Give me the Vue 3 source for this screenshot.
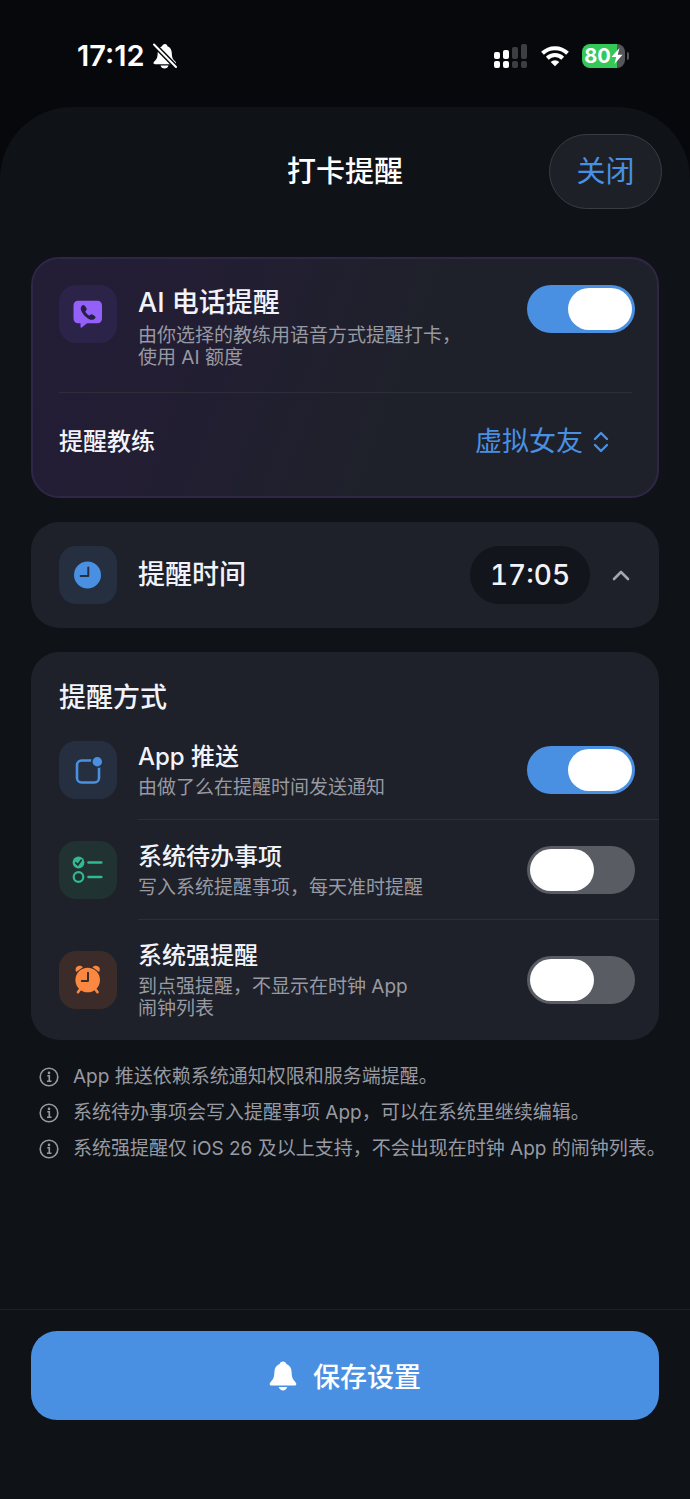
<template>
  <div class="page">
    <div class="status-bar">
      <div class="status-left">
        <span class="status-time">17:12</span>
        <svg class="icon-mute" viewBox="0 0 24 26" aria-hidden="true">
          <path
            d="M12 1c-1.600 0-2.700 1-3 2.300C6.300 4.500 4.800 6.800 4.700 10c-.100 4.500-.900 6-2.900 8-.9.900-1.300 1.400-1.300 2 0 .8.600 1.200 1.500 1.200h19.500c.9 0 1.500-.4 1.500-1.200 0-.6-.4-1.100-1.300-2-2-2-2.800-3.500-2.900-8-.100-3.200-1.600-5.500-4.300-6.700C14.200 2 13.600 1 12 1z"
            fill="#fff"
          />
          <path d="M7.500 22.600h8c-.5 1.800-2 2.900-4 2.900s-3.500-1.100-4-2.900z" fill="#fff" />
          <path d="M0 0.500L24 25" stroke="#07080c" stroke-width="5" />
          <path d="M1 1.500L23 24" stroke="#fff" stroke-width="2" stroke-linecap="round" />
        </svg>
      </div>
      <div class="status-right">
        <svg class="icon-signal" viewBox="0 0 34 24" aria-hidden="true">
          <g fill="#fff">
            <rect x="0" y="8" width="6" height="7" rx="2" />
            <rect x="9" y="6" width="6" height="9" rx="2" />
            <rect x="0" y="17" width="6" height="7" rx="2" />
            <rect x="9" y="17" width="6" height="7" rx="2" />
          </g>
          <g fill="#3d3e41">
            <rect x="18" y="3" width="6" height="12" rx="2" />
            <rect x="27" y="0" width="6" height="15" rx="2" />
            <rect x="18" y="17" width="6" height="7" rx="2" />
            <rect x="27" y="17" width="6" height="7" rx="2" />
          </g>
        </svg>
        <svg class="icon-wifi" viewBox="0 0 28 22" aria-hidden="true">
          <g fill="none" stroke="#fff" stroke-width="4">
            <path d="M1.500 8.200a18 18 0 0 1 25 0" />
            <path d="M6.300 13.200a11 11 0 0 1 15.400 0" />
          </g>
          <path d="M9.700 16.900a6.200 6.200 0 0 1 8.600 0L14 21.300z" fill="#fff" />
        </svg>
        <div class="battery">
          <span class="battery-level">80</span>
          <svg class="icon-bolt" viewBox="0 0 12 16" aria-hidden="true">
            <path d="M8.500 0L0.500 9h4.700L3.500 16l8-9.300H6.800z" fill="#fff" />
          </svg>
        </div>
        <span class="battery-nub"></span>
      </div>
    </div>

    <main class="sheet">
      <header class="sheet-header">
        <h1>打卡提醒</h1>
        <button type="button" class="btn-close">关闭</button>
      </header>

      <div class="content">
        <section class="card card-ai">
          <div class="ai-row">
            <span class="icon-box purple">
              <svg viewBox="0 0 58 58" aria-hidden="true">
                <path
                  d="M19 15.700h19.500a4.500 4.500 0 0 1 4.500 4.500v13.600a4.500 4.500 0 0 1-4.500 4.500H28l-5.200 4.200c-.7.500-1.300.2-1.300-.6v-3.600H19a4.500 4.500 0 0 1-4.500-4.500V20.200a4.500 4.500 0 0 1 4.500-4.500z"
                  fill="#9360fa"
                />
                <path
                  d="M22.300 21.600c.9-1.300 2.200-2.200 3.300-1 .8 1 1.500 2 2 3 .4 1-.1 1.600-.8 2.200-.5.500-.5.900-.2 1.400.8 1.400 1.900 2.500 3.300 3.200.5.300.9.200 1.300-.3.600-.8 1.300-1.200 2.200-.7l2.600 1.800c1.200.9.300 2.300-1 3.100-1.500.9-3.300.7-5.300-.4-3.300-1.800-5.900-4.500-7.300-7.800-.8-1.800-.9-3.300-.1-4.500z"
                  fill="#281f45"
                />
              </svg>
            </span>
            <div class="text">
              <label class="title large" for="ai-call">AI 电话提醒</label>
              <p class="desc">{{ aiDesc }}</p>
            </div>
            <input id="ai-call" v-model="aiCall" class="switch" type="checkbox" role="switch" />
          </div>
          <div class="coach-row">
            <label class="title" for="coach">提醒教练</label>
            <div class="coach-picker">
              <select id="coach" v-model="coach">
                <option v-for="c in coaches" :key="c">{{ c }}</option>
              </select>
              <svg class="icon-updown" viewBox="0 0 16 22" aria-hidden="true">
                <path d="M2 8l6-6 6 6M2 14l6 6 6-6" />
              </svg>
            </div>
          </div>
        </section>

        <section class="card card-time">
          <span class="icon-box blue">
            <svg viewBox="0 0 58 58" aria-hidden="true">
              <circle cx="28.500" cy="29" r="13.500" fill="#4a90e2" />
              <path d="M29.300 21.500V30h-7.600" fill="none" stroke="#252f40" stroke-width="2" stroke-linecap="round" stroke-linejoin="round" />
            </svg>
          </span>
          <h2 class="title large">提醒时间</h2>
          <button type="button" class="btn-time">{{ time }}</button>
          <button type="button" class="btn-expand" aria-label="展开" @click="expanded = !expanded">
            <svg viewBox="0 0 18 12" aria-hidden="true">
              <path d="M2 10l7-7 7 7" />
            </svg>
          </button>
        </section>

        <section class="card card-methods">
          <h2 class="title large">提醒方式</h2>
          <div v-for="m in methods" :key="m.id" class="method">
            <span class="icon-box" :class="m.color">
              <svg v-if="m.id === 'push'" viewBox="0 0 58 58" aria-hidden="true">
                <rect x="18" y="19.500" width="22" height="22" rx="4.500" fill="none" stroke="#4a90e2" stroke-width="2.600" />
                <circle cx="38.300" cy="20.700" r="6.400" fill="#252f40" />
                <circle cx="38.300" cy="20.700" r="4.700" fill="#4a90e2" />
              </svg>
              <svg v-else-if="m.id === 'todo'" viewBox="0 0 58 58" aria-hidden="true">
                <circle cx="19.500" cy="21.500" r="5.900" fill="#32b892" />
                <path d="M16.800 21.800l2 2.200 3.400-4.800" fill="none" stroke="#203232" stroke-width="1.800" stroke-linecap="round" stroke-linejoin="round" />
                <circle cx="19.500" cy="36" r="4.800" fill="none" stroke="#32b892" stroke-width="2.200" />
                <path d="M29.500 21.500h12.800M29.500 36h12.800" stroke="#32b892" stroke-width="2.600" stroke-linecap="round" />
              </svg>
              <svg v-else viewBox="0 0 58 58" aria-hidden="true">
                <g fill="none" stroke="#fb8841" stroke-width="2.600" stroke-linecap="round">
                  <path d="M21 38.500l-2 2.600M36.500 38.500l2 2.600" />
                </g>
                <path d="M17.200 20.900c-1.100-2 -.7-4.300.9-5.400 2-1.200 4.600-.7 5.800.8zM40.200 20.900c1.100-2 .7-4.300-.9-5.400-2-1.200-4.600-.7-5.800.8z" fill="#fb8841" />
                <circle cx="28.700" cy="29" r="12.300" fill="#fb8841" />
                <path d="M29 21.800V30h-6.200" fill="none" stroke="#3b2c2a" stroke-width="2" stroke-linecap="round" stroke-linejoin="round" />
              </svg>
            </span>
            <div class="method-body">
              <div class="text">
                <label class="title" :for="m.id">{{ m.title }}</label>
                <p class="desc">{{ m.desc }}</p>
              </div>
              <input :id="m.id" v-model="m.on" class="switch" type="checkbox" role="switch" />
            </div>
          </div>
        </section>

        <ul class="notes">
          <li v-for="note in notes" :key="note">
            <svg viewBox="0 0 20 20" aria-hidden="true">
              <circle cx="10" cy="10" r="8.800" />
              <path d="M8.300 8.800h2v5.200M8 14.200h4.500" />
              <circle class="dot" cx="10" cy="5.900" r="1.300" />
            </svg>
            <span>{{ note }}</span>
          </li>
        </ul>
      </div>

      <footer class="footer">
        <button type="button" class="btn-save">
          <svg viewBox="0 0 28 30" aria-hidden="true">
            <path
              d="M14 .5c-1.800 0-3 1-3.400 2.500C7.300 4.200 5.500 7 5.400 11c-.1 5-1.200 7.300-3.500 9.700C1 21.600.700 22.300.700 23c0 1 .8 1.600 1.900 1.600h22.800c1.100 0 1.900-.6 1.900-1.600 0-.7-.3-1.400-1.200-2.300-2.300-2.400-3.400-4.700-3.500-9.700-.1-4-1.900-6.800-5.200-8C17 1.500 15.800.5 14 .5z"
              fill="#fff"
            />
            <path d="M9.800 26h8.400c-.6 2.100-2.200 3.500-4.200 3.500S10.400 28.100 9.800 26z" fill="#fff" />
          </svg>
          <span>保存设置</span>
        </button>
      </footer>
    </main>
  </div>
</template>

<script setup>
import { ref } from 'vue'

const aiCall = ref(true)
const aiDesc = '由你选择的教练用语音方式提醒打卡，\n使用 AI 额度'

const coaches = ['虚拟女友']
const coach = ref('虚拟女友')

const time = ref('17:05')
const expanded = ref(false)

const methods = ref([
  { id: 'push', color: 'blue', title: 'App 推送', desc: '由做了么在提醒时间发送通知', on: true },
  { id: 'todo', color: 'green', title: '系统待办事项', desc: '写入系统提醒事项，每天准时提醒', on: false },
  { id: 'alarm', color: 'orange', title: '系统强提醒', desc: '到点强提醒，不显示在时钟 App\n闹钟列表', on: false }
])

const notes = [
  'App 推送依赖系统通知权限和服务端提醒。',
  '系统待办事项会写入提醒事项 App，可以在系统里继续编辑。',
  '系统强提醒仅 iOS 26 及以上支持，不会出现在时钟 App 的闹钟列表。'
]
</script>

<style>
body {
  background: #07080c;
}
</style>

<style scoped>
.page {
  min-height: 100vh;
  display: flex;
  flex-direction: column;
  background: #07080c;
  color: #f2f3fa;
  font-family: Inter, "Noto Sans CJK SC", sans-serif;
}

.page * {
  box-sizing: border-box;
}

button,
select {
  font-family: inherit;
  border: none;
  cursor: pointer;
}

svg {
  display: block;
  flex: none;
}

h1,
h2,
p,
ul {
  margin: 0;
  padding: 0;
}

/* Status bar */
.status-bar {
  height: 107px;
  padding: 5px 61px 0 77px;
  display: flex;
  justify-content: space-between;
  align-items: center;
}

.status-left,
.status-right {
  display: flex;
  align-items: center;
}

.status-left {
  gap: 8px;
}

.status-time {
  font-size: 29px;
  font-weight: 600;
  line-height: 32px;
  color: #fff;
}

.icon-mute {
  width: 24px;
  height: 26px;
}

.icon-signal {
  width: 34px;
  height: 24px;
  margin-right: 13px;
}

.icon-wifi {
  width: 28px;
  height: 22px;
  margin-right: 13px;
}

.battery {
  width: 43px;
  height: 24px;
  border-radius: 8px;
  display: flex;
  align-items: center;
  justify-content: center;
  background: linear-gradient(90deg, #34c759 82%, #55565a 82%);
}

.battery-level {
  font-size: 20px;
  font-weight: 700;
  line-height: 24px;
  color: #fff;
}

.icon-bolt {
  width: 12px;
  height: 16px;
}

.battery-nub {
  width: 2px;
  height: 8px;
  margin-left: 2px;
  border-radius: 0 2px 2px 0;
  background: #55565a;
}

/* Sheet */
.sheet {
  flex: 1;
  display: flex;
  flex-direction: column;
  background: #0f1216;
  border-radius: 72px 72px 0 0;
}

.sheet-header {
  display: grid;
  grid-template-columns: 1fr auto 1fr;
  align-items: center;
  padding: 27px 28px 48px;
}

.sheet-header h1 {
  grid-column: 2;
  font-size: 29px;
  font-weight: 500;
  line-height: 40px;
  color: #fff;
}

.btn-close {
  justify-self: end;
  width: 113px;
  height: 75px;
  padding: 0;
  border: 1px solid #3a3c44;
  border-radius: 38px;
  background: #1d2027;
  color: #4a90e2;
  font-size: 29px;
  line-height: 40px;
}

.content {
  display: flex;
  flex-direction: column;
  gap: 24px;
  padding: 0 31px;
}

.card {
  background: #1e2129;
  border-radius: 28px;
}

.icon-box {
  flex: none;
  width: 58px;
  height: 58px;
  border-radius: 17px;
}

.icon-box.purple {
  background: #2c2348;
}

.icon-box.blue {
  background: #252f40;
}

.icon-box.green {
  background: #203232;
}

.icon-box.orange {
  background: #3b2c2a;
}

.text {
  flex: 1;
  display: flex;
  flex-direction: column;
  gap: 4px;
}

.title {
  font-size: 24px;
  font-weight: 500;
  line-height: 32px;
}

.title.large {
  font-size: 27px;
}

.desc {
  font-size: 19px;
  line-height: 22px;
  color: #989aa3;
  white-space: pre-line;
}

/* Switch */
.switch {
  appearance: none;
  flex: none;
  display: flex;
  align-items: center;
  width: 108px;
  height: 48px;
  margin: 0;
  padding: 0 3px;
  border-radius: 24px;
  background: #5a5c64;
  cursor: pointer;
}

.switch::before {
  content: "";
  width: 64px;
  height: 42px;
  border-radius: 21px;
  background: #fff;
}

.switch:checked {
  justify-content: flex-end;
  background: #4a90e2;
}

/* AI call card */
.card-ai {
  padding: 26px 22px 6px 26px;
  border: 2px solid #2f2648;
  background: linear-gradient(110deg, #231d36 0%, #221e32 30%, #1e2129 62%);
}

.ai-row {
  display: flex;
  align-items: flex-start;
  gap: 21px;
}

.ai-row .text {
  gap: 6px;
  padding: 2px 0 23px;
}

.coach-row {
  display: flex;
  align-items: center;
  justify-content: space-between;
  height: 98px;
  margin-right: 3px;
  padding-right: 23px;
  border-top: 1px solid #2e2e3b;
}

.coach-picker {
  display: flex;
  align-items: center;
  gap: 10px;
}

.coach-picker select {
  appearance: none;
  field-sizing: content;
  padding: 0;
  background: transparent;
  color: #4a90e2;
  font-size: 27px;
  line-height: 36px;
}

.icon-updown {
  width: 16px;
  height: 22px;
  fill: none;
  stroke: #4a90e2;
  stroke-width: 2.4;
  stroke-linecap: round;
  stroke-linejoin: round;
}

/* Time card */
.card-time {
  display: flex;
  align-items: center;
  padding: 24px 29px 24px 28px;
}

.card-time .title {
  flex: 1;
  margin-left: 21px;
}

.btn-time {
  width: 120px;
  height: 58px;
  padding: 0;
  border-radius: 29px;
  background: #13151c;
  color: #f2f3fa;
  font-size: 28px;
  font-weight: 500;
  font-variant-numeric: tabular-nums;
}

.btn-expand {
  margin-left: 22px;
  padding: 0;
  background: transparent;
}

.btn-expand svg {
  width: 18px;
  height: 12px;
  fill: none;
  stroke: #a4a6af;
  stroke-width: 2.6;
  stroke-linecap: round;
  stroke-linejoin: round;
}

/* Methods */
.card-methods {
  padding-top: 30px;
}

.card-methods h2 {
  margin: 0 28px 6px;
}

.method {
  display: flex;
  align-items: center;
  gap: 21px;
  padding-left: 28px;
}

.method-body {
  flex: 1;
  display: flex;
  align-items: center;
  min-height: 100px;
  padding: 20px 24px 20px 0;
}

.method:not(:last-child) .method-body {
  border-bottom: 1px solid #2c2f37;
}

/* Notes */
.notes {
  display: flex;
  flex-direction: column;
  gap: 10px;
  margin-right: -24px;
  padding-left: 8px;
  list-style: none;
}

.notes li {
  display: flex;
  align-items: center;
  gap: 14px;
  font-size: 19px;
  line-height: 26px;
  color: #989aa3;
}

.notes svg {
  width: 20px;
  height: 20px;
  fill: none;
  stroke: #989aa3;
  stroke-width: 1.6;
}

.notes .dot {
  fill: #989aa3;
  stroke: none;
}

/* Footer */
.footer {
  margin-top: auto;
  padding: 21px 31px 79px;
  border-top: 1px solid #1d2024;
}

.btn-save {
  width: 100%;
  height: 89px;
  display: flex;
  align-items: center;
  justify-content: center;
  gap: 16px;
  border-radius: 26px;
  background: #4a90e2;
  color: #fff;
  font-size: 27px;
  font-weight: 500;
}

.btn-save svg {
  width: 28px;
  height: 30px;
}
</style>
